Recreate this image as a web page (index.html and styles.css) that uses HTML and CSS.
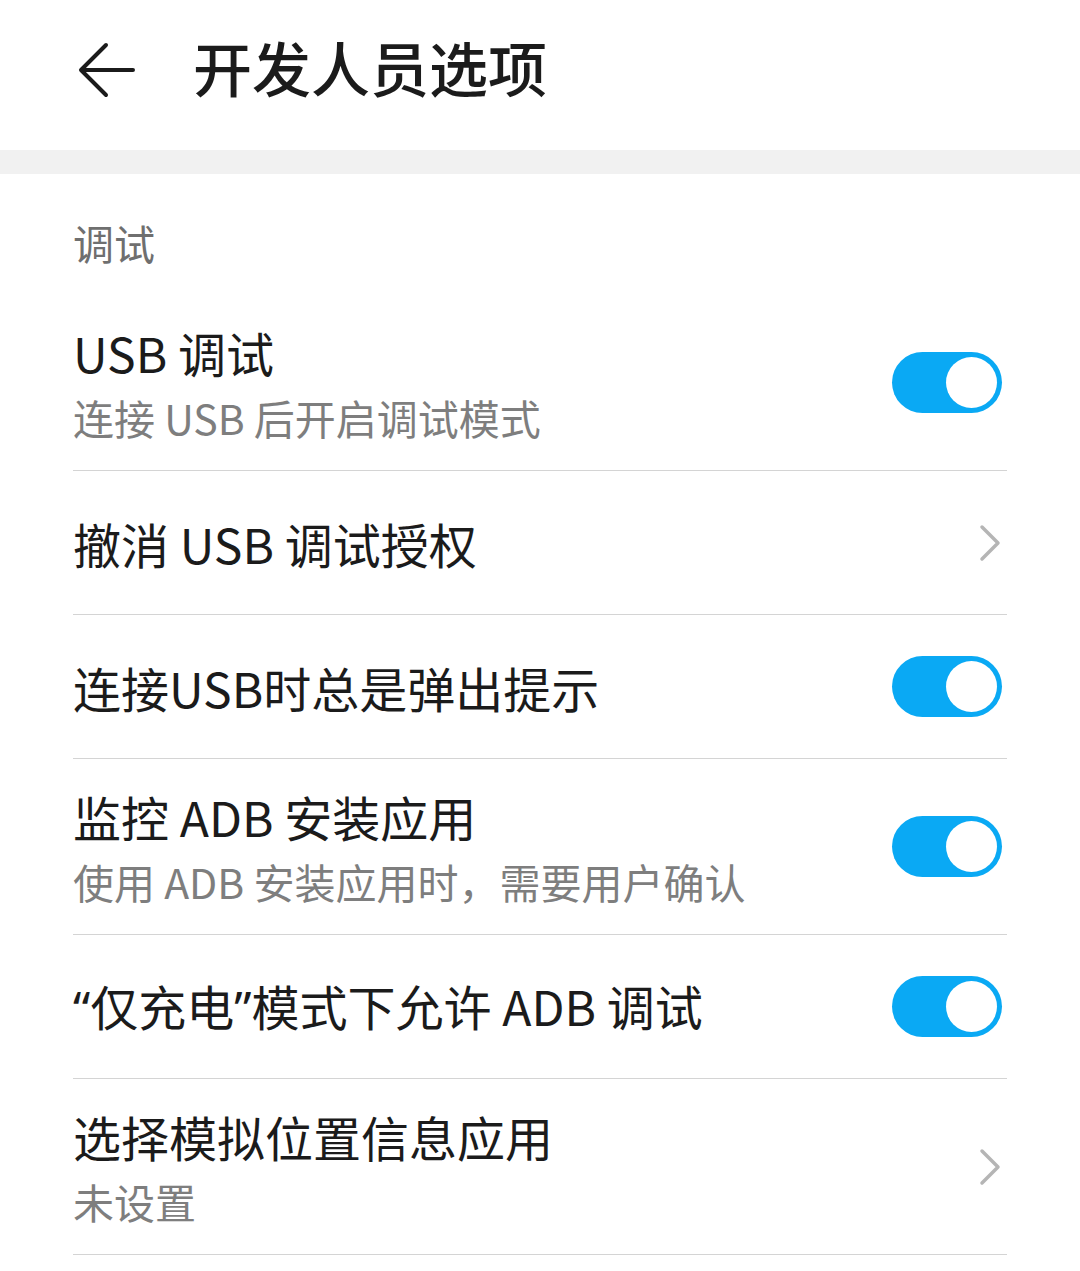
FILE: index.html
```html
<!DOCTYPE html>
<html lang="zh-CN">
<head>
<meta charset="utf-8">
<title>开发人员选项</title>
<link rel="stylesheet" href="styles.css">
</head>
<body>
<header class="appbar">
  <svg class="back" width="58" height="56" viewBox="0 0 58 56" aria-hidden="true">
    <path d="M55 28 H4 M28 3 L3 28 L28 53" fill="none" stroke="#1b1b1b" stroke-width="4" stroke-linecap="round" stroke-linejoin="round"/>
  </svg>
  <h1 class="title">开发人员选项</h1>
</header>
<div class="band"></div>
<main class="list">
  <div class="section">调试</div>

  <div class="row two">
    <div class="text">
      <div class="primary">USB 调试</div>
      <div class="secondary">连接 USB 后开启调试模式</div>
    </div>
    <div class="toggle"><span class="knob"></span></div>
  </div>

  <div class="row">
    <div class="text">
      <div class="primary">撤消 USB 调试授权</div>
    </div>
    <svg class="chev" width="24" height="38" viewBox="0 0 24 38" aria-hidden="true">
      <path d="M4 3 L20 19 L4 35" fill="none" stroke="#b5b5b5" stroke-width="3.5" stroke-linecap="round" stroke-linejoin="round"/>
    </svg>
  </div>

  <div class="row">
    <div class="text">
      <div class="primary">连接USB时总是弹出提示</div>
    </div>
    <div class="toggle"><span class="knob"></span></div>
  </div>

  <div class="row two">
    <div class="text">
      <div class="primary">监控 ADB 安装应用</div>
      <div class="secondary">使用 ADB 安装应用时，需要用户确认</div>
    </div>
    <div class="toggle"><span class="knob"></span></div>
  </div>

  <div class="row">
    <div class="text">
      <div class="primary"><span class="quote">“</span>仅充电<span class="quote">”</span>模式下允许 ADB 调试</div>
    </div>
    <div class="toggle"><span class="knob"></span></div>
  </div>

  <div class="row two">
    <div class="text">
      <div class="primary">选择模拟位置信息应用</div>
      <div class="secondary">未设置</div>
    </div>
    <svg class="chev" width="24" height="38" viewBox="0 0 24 38" aria-hidden="true">
      <path d="M4 3 L20 19 L4 35" fill="none" stroke="#b5b5b5" stroke-width="3.5" stroke-linecap="round" stroke-linejoin="round"/>
    </svg>
  </div>
</main>
</body>
</html>
```

FILE: styles.css
```css
html, body {
  margin: 0;
  padding: 0;
  background: #ffffff;
}

body {
  font-family: "Noto Sans CJK SC", "Noto Sans", sans-serif;
  color: #1b1b1b;
  width: 1080px;
  overflow: hidden;
}

.appbar {
  height: 150px;
  display: flex;
  align-items: center;
  padding-left: 78px;
  box-sizing: border-box;
}

.back {
  display: block;
  margin-top: -10px;
}

.title {
  margin: -16px 0 0 57px;
  font-size: 59px;
  font-weight: 500;
  line-height: 80px;
  color: #1b1b1b;
}

.band {
  height: 24px;
  background: #f1f1f1;
}

.list {
  margin: 0 73px;
}

.section {
  height: 121px;
  box-sizing: border-box;
  padding-top: 42px;
  font-size: 41px;
  line-height: 52px;
  color: #6f6f6f;
}

.row {
  height: 144px;
  display: flex;
  align-items: center;
  justify-content: space-between;
  border-bottom: 1.5px solid #d4d4d4;
  box-sizing: border-box;
}

.row.two {
  height: 176px;
}

.primary {
  font-size: 48px;
  line-height: 60px;
  color: #1b1b1b;
}

.quote {
  font-family: "Noto Sans", "Liberation Sans", sans-serif;
}

.secondary {
  font-size: 41px;
  line-height: 54px;
  margin-top: 8px;
  color: #7e7e7e;
}

.toggle {
  position: relative;
  width: 110px;
  height: 61px;
  border-radius: 31px;
  background: #0aa9f4;
  margin-right: 5px;
  flex: none;
}

.knob {
  position: absolute;
  top: 5px;
  right: 5px;
  width: 51px;
  height: 51px;
  border-radius: 50%;
  background: #ffffff;
}

.chev {
  display: block;
  flex: none;
  margin-right: 5px;
}
```
